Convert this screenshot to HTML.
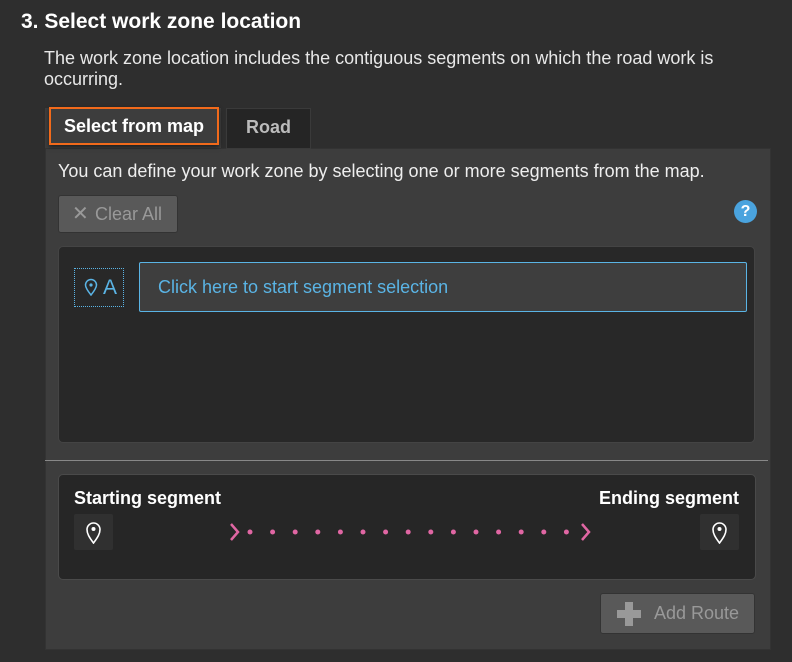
<!DOCTYPE html>
<html><head><style>
body{margin:0;width:792px;height:662px;background:#2e2e2e;font-family:"Liberation Sans",sans-serif;position:relative;overflow:hidden;color:#fff}
.a{position:absolute}
</style></head><body>
<div class="a" style="left:21px;top:10px;font-size:21px;font-weight:bold">3. Select work zone location</div>
<div class="a" style="left:44px;top:48px;font-size:18px;line-height:21px;color:#e8e8e8;width:690px">The work zone location includes the contiguous segments on which the road work is occurring.</div>
<div class="a" style="left:45px;top:148px;width:724px;height:500px;background:#3d3d3d;border:1px solid #333"></div>
<div class="a" style="left:45px;top:108px;width:176px;height:40px;background:#3d3d3d"></div>
<div class="a" style="left:49px;top:107px;width:166px;height:34px;border:2px solid #f26a1b;font-size:18px;font-weight:bold;line-height:34px;text-align:center;box-shadow:0 2px 4px rgba(0,0,0,.5)">Select from map</div>
<div class="a" style="left:226px;top:108px;width:83px;height:39px;background:#252525;border:1px solid #3a3a3a;font-size:18px;font-weight:bold;line-height:36px;text-align:center;color:#bbb">Road</div>
<div class="a" style="left:58px;top:161px;font-size:18px;color:#eee">You can define your work zone by selecting one or more segments from the map.</div>
<div class="a" style="left:58px;top:195px;width:118px;height:36px;background:#595959;border:1px solid #333;border-radius:3px;font-size:18px;color:#999;line-height:36px"><span style="position:absolute;left:13px;font-size:20px">✕</span><span style="position:absolute;left:36px">Clear All</span></div>
<div class="a" style="left:734px;top:200px;width:23px;height:23px;border-radius:50%;background:#4aa3de;font-weight:bold;font-size:16px;text-align:center;line-height:23px">?</div>
<div class="a" style="left:58px;top:246px;width:695px;height:195px;background:#282828;border:1px solid #444;border-radius:5px"></div>
<div class="a" style="left:74px;top:268px;width:48px;height:37px;border:1px dotted #5ab4e5;color:#5ab4e5;font-size:21px;line-height:38px"><svg style="position:absolute;left:9px;top:9px" width="14" height="18" viewBox="0 0 14 18"><path d="M7 17C3 12 1.5 9.5 1.5 7a5.5 5.5 0 0 1 11 0c0 2.5-1.5 5-5.5 10z" fill="none" stroke="#5ab4e5" stroke-width="1.5"/><circle cx="7" cy="7" r="1.6" fill="#5ab4e5"/></svg><span style="position:absolute;left:28px">A</span></div>
<div class="a" style="left:139px;top:262px;background:#3e3e3e;border:1px solid #5ab4e5;border-radius:2px;color:#5ab4e5;font-size:18px;line-height:48px;padding-left:18px;box-sizing:border-box;width:608px;height:50px">Click here to start segment selection</div>
<div class="a" style="left:45px;top:460px;width:723px;height:1px;background:#888"></div>
<div class="a" style="left:58px;top:474px;width:696px;height:104px;background:#262626;border:1px solid #4a4a4a;border-radius:5px"></div>
<div class="a" style="left:74px;top:488px;font-size:18px;font-weight:bold">Starting segment</div>
<div class="a" style="left:599px;top:488px;font-size:18px;font-weight:bold">Ending segment</div>
<div class="a" style="left:74px;top:514px;width:39px;height:36px;background:#303030;border-radius:2px"><svg style="position:absolute;left:11px;top:6px" width="17" height="24" viewBox="0 0 17 24"><path d="M8.5 23C4 17 2 13.5 2 9.5a6.5 6.5 0 0 1 13 0c0 4-2 7.5-6.5 13.5z" fill="none" stroke="#fff" stroke-width="1.6"/><circle cx="8.5" cy="9" r="2" fill="#fff"/></svg></div>
<div class="a" style="left:700px;top:514px;width:39px;height:36px;background:#303030;border-radius:2px"><svg style="position:absolute;left:11px;top:6px" width="17" height="24" viewBox="0 0 17 24"><path d="M8.5 23C4 17 2 13.5 2 9.5a6.5 6.5 0 0 1 13 0c0 4-2 7.5-6.5 13.5z" fill="none" stroke="#fff" stroke-width="1.6"/><circle cx="8.5" cy="9" r="2" fill="#fff"/></svg></div>
<svg class="a" style="left:220px;top:515px" width="380" height="34"><g stroke="#e066a3" stroke-width="2.5" fill="none"><path d="M11 9l7 8-7 8"/><path d="M362 9l7 8-7 8"/></g><g fill="#e066a3">
<circle cx="30" cy="17" r="2.5"/><circle cx="52.6" cy="17" r="2.5"/><circle cx="75.2" cy="17" r="2.5"/><circle cx="97.8" cy="17" r="2.5"/><circle cx="120.4" cy="17" r="2.5"/><circle cx="143" cy="17" r="2.5"/><circle cx="165.6" cy="17" r="2.5"/><circle cx="188.2" cy="17" r="2.5"/><circle cx="210.8" cy="17" r="2.5"/><circle cx="233.4" cy="17" r="2.5"/><circle cx="256" cy="17" r="2.5"/><circle cx="278.6" cy="17" r="2.5"/><circle cx="301.2" cy="17" r="2.5"/><circle cx="323.8" cy="17" r="2.5"/><circle cx="346.4" cy="17" r="2.5"/></g></svg>
<div class="a" style="left:600px;top:593px;width:153px;height:39px;background:#595959;border:1px solid #333;border-radius:3px;color:#999;font-size:18px;line-height:39px"><span style="position:absolute;left:16px;top:8px;width:24px;height:24px"><span style="position:absolute;left:8px;top:0;width:8px;height:24px;background:#999"></span><span style="position:absolute;left:0;top:8px;width:24px;height:8px;background:#999"></span></span><span style="position:absolute;left:53px">Add Route</span></div>
</body></html>
